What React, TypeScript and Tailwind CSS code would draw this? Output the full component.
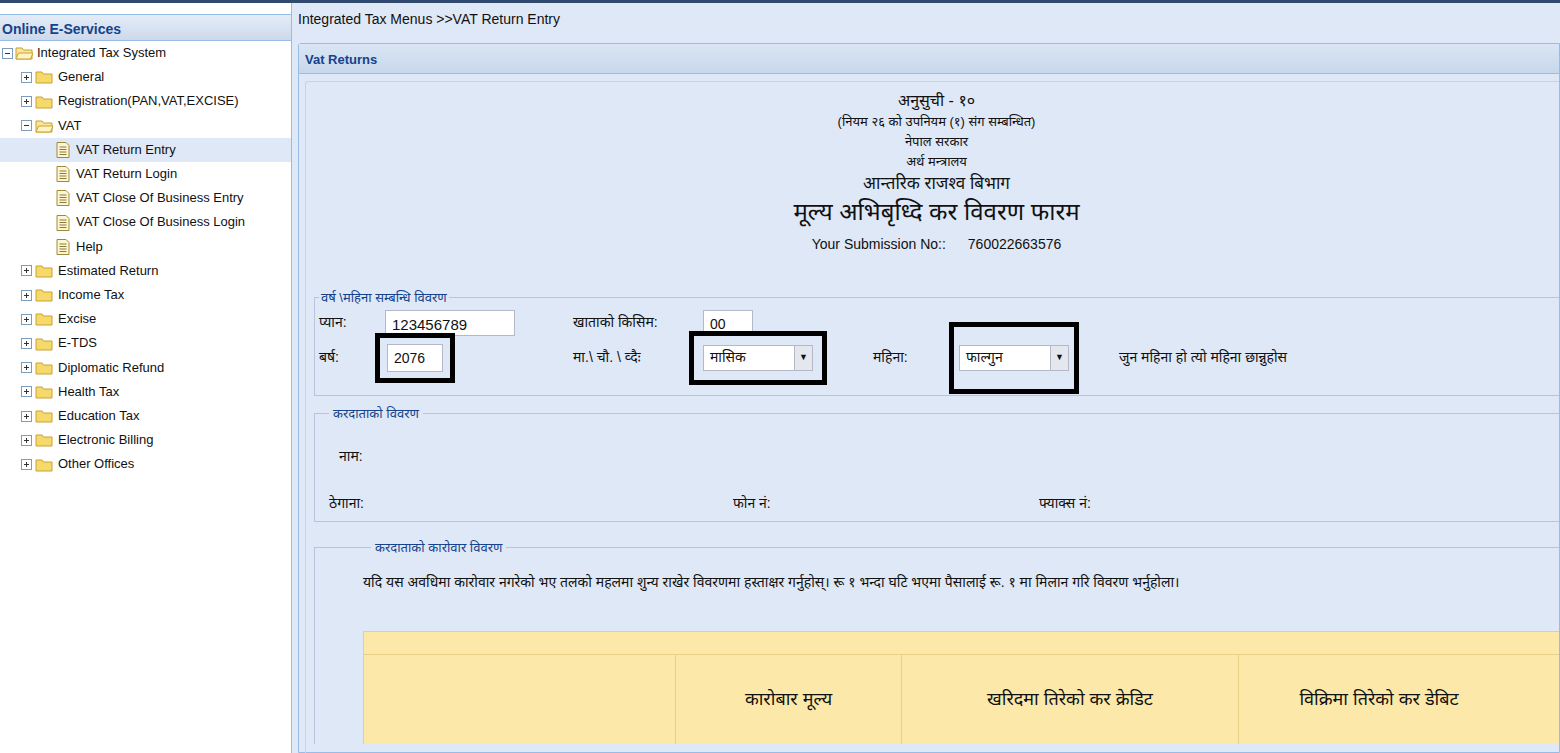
import React from "react";

const F = { fontFamily: '"Liberation Sans","Noto Sans","Noto Sans Devanagari",sans-serif' };

function Folder({ open }: { open?: boolean }) {
  return (
    <svg width="18" height="14" viewBox="0 0 18 14">
      <path d="M1 2h6l1.5 2H17v9H1z" fill={open ? "#fbe59b" : "#f6d96b"} stroke="#c9a22e" />
      {open && <path d="M1 13l2.5-6H18l-2.5 6z" fill="#fff3c4" stroke="#c9a22e" />}
    </svg>
  );
}
function Box({ minus }: { minus?: boolean }) {
  return (
    <svg width="11" height="11" viewBox="0 0 11 11">
      <rect x="0.5" y="0.5" width="10" height="10" fill="#fff" stroke="#7f9db9" />
      <path d="M3 5.5h5" stroke="#333" />
      {!minus && <path d="M5.5 3v5" stroke="#333" />}
    </svg>
  );
}
function Doc() {
  return (
    <svg width="14" height="16" viewBox="0 0 14 16">
      <path d="M1 .5h9l3 3v12H1z" fill="#fdf6d0" stroke="#a08a3a" />
      <path d="M3.5 5h7M3.5 7.5h7M3.5 10h7M3.5 12.5h7" stroke="#8a7a40" />
    </svg>
  );
}

const folders = ["Estimated Return", "Income Tax", "Excise", "E-TDS", "Diplomatic Refund", "Health Tax", "Education Tax", "Electronic Billing", "Other Offices"];
const vatItems = ["VAT Return Entry", "VAT Return Login", "VAT Close Of Business Entry", "VAT Close Of Business Login", "Help"];

function Sel({ v }: { v: string }) {
  return (
    <div className="flex h-[26px] w-[110px] items-center border border-[#b5b8c8] bg-white text-[14px]">
      <span className="flex-1 pl-[6px]">{v}</span>
      <span className="flex h-full w-[18px] items-center justify-center border-l border-[#b5b8c8] bg-[#e4e8ee] text-[9px]">▼</span>
    </div>
  );
}

export default function App() {
  return (
    <div className="flex h-[753px] w-[1560px] overflow-hidden border-t-[3px] border-[#2f4a6e] bg-white text-[#111]" style={F}>
      <aside className="w-[292px] shrink-0 border-r border-[#99bbe8] bg-white pt-[11px]">
        <div className="h-[27px] border-y border-[#99bbe8] bg-gradient-to-b from-[#e4ecf7] to-[#cdd9ea] pl-[2px] pt-[4px] text-[14px] font-bold text-[#15428b]">Online E-Services</div>
        <div className="text-[13px] leading-[24.2px]">
          <div className="flex items-center gap-[2px] pl-[2px]"><Box minus /><Folder open /><span className="ml-[2px]">Integrated Tax System</span></div>
          {["General", "Registration(PAN,VAT,EXCISE)"].map(t => (
            <div key={t} className="flex items-center gap-[3px] pl-[21px]"><Box /><Folder /><span className="ml-[2px]">{t}</span></div>
          ))}
          <div className="flex items-center gap-[3px] pl-[21px]"><Box minus /><Folder open /><span className="ml-[2px]">VAT</span></div>
          {vatItems.map((t, i) => (
            <div key={t} className={`flex items-center gap-[6px] pl-[56px] ${i === 0 ? "bg-[#dfe8f6]" : ""}`}><Doc /><span>{t}</span></div>
          ))}
          {folders.map(t => (
            <div key={t} className="flex items-center gap-[3px] pl-[21px]"><Box /><Folder /><span className="ml-[2px]">{t}</span></div>
          ))}
        </div>
      </aside>
      <main className="flex-1 bg-[#dfe8f6] pl-[6px]">
        <div className="h-[40px] pt-[6px] text-[14px]">Integrated Tax Menus &gt;&gt;VAT Return Entry</div>
        <div className="h-[710px] rounded-tl-[3px] border border-[#99bbe8]">
          <div className="h-[30px] border-b border-[#99bbe8] bg-gradient-to-b from-[#dae6f4] to-[#c7d7ec] pl-[6px] pt-[6px] text-[13px] font-bold text-[#15428b]">Vat Returns</div>
          <div className="ml-[6px] mt-[7px] h-full rounded-tl-[3px] border-l border-t border-[#c5d3e8] pl-[8px]">
            <div className="flex flex-col items-center pt-[8px] text-[13px] leading-[20px]">
              <div className="text-[16px] leading-[22px]">अनुसुची - १०</div>
              <div>(नियम २६ को उपनियम (१) संग सम्बन्धित)</div>
              <div>नेपाल सरकार</div>
              <div>अर्थ मन्त्रालय</div>
              <div className="text-[17px] leading-[24px]">आन्तरिक राजश्व बिभाग</div>
              <div className="text-[24px] leading-[32px]">मूल्य अभिबृध्दि कर विवरण फारम</div>
              <div className="mt-[6px] text-[14px]">Your Submission No::<span className="ml-[22px]">760022663576</span></div>
            </div>
            <fieldset className="mt-[34px] h-[108px] border-t border-l border-b border-[#b5c5dc] pl-[4px]">
              <legend className="px-[2px] text-[13px] text-[#15428b]">वर्ष \महिना सम्बन्धि विवरण</legend>
              <div className="flex h-[30px] items-center text-[14px]">
                <span className="w-[66px]">प्यान:</span>
                <div className="h-[26px] w-[130px] border border-[#b5b8c8] bg-white pl-[6px] pt-[3px] text-[15px]">123456789</div>
                <span className="ml-[58px] w-[130px]">खाताको किसिम:</span>
                <div className="h-[26px] w-[50px] border border-[#b5b8c8] bg-white pl-[6px] pt-[3px]">00</div>
              </div>
              <div className="flex h-[40px] items-center text-[14px]">
                <span className="w-[56px]">बर्ष:</span>
                <div className="flex h-[50px] w-[80px] items-center justify-center border-[5px] border-black">
                  <div className="h-[28px] w-[56px] border border-[#b5b8c8] bg-white pl-[6px] pt-[3px]">2076</div>
                </div>
                <span className="ml-[118px] w-[116px]">मा.\ चौ. \ व्दैः</span>
                <div className="flex h-[54px] w-[138px] items-center justify-center border-[5px] border-black"><Sel v="मासिक" /></div>
                <span className="ml-[46px] w-[76px]">महिना:</span>
                <div className="flex h-[72px] w-[130px] items-center justify-center border-[5px] border-black"><Sel v="फाल्गुन" /></div>
                <span className="ml-[40px]">जुन महिना हो त्यो महिना छान्नुहोस</span>
              </div>
            </fieldset>
            <fieldset className="mt-[8px] h-[118px] border-t border-l border-b border-[#b5c5dc] pl-[14px]">
              <legend className="px-[4px] text-[13px] text-[#15428b]">करदाताको विवरण</legend>
              <div className="mt-[22px] pl-[10px] text-[14px]">नाम:</div>
              <div className="mt-[26px] flex text-[14px]">
                <span className="w-[404px]">ठेगाना:</span>
                <span className="w-[306px]">फोन नं:</span>
                <span>फ्याक्स नं:</span>
              </div>
            </fieldset>
            <fieldset className="mt-[16px] border-t border-l border-[#b5c5dc] pl-[48px]">
              <legend className="ml-[8px] px-[4px] text-[13px] text-[#15428b]">करदाताको कारोवार विवरण</legend>
              <div className="mt-[14px] text-[14px]">यदि यस अवधिमा कारोवार नगरेको भए तलको महलमा शुन्य राखेर विवरणमा हस्ताक्षर गर्नुहोस्। रू १ भन्दा घटि भएमा पैसालाई रू. १ मा मिलान गरि विवरण भर्नुहोला।</div>
              <div className="mt-[38px] border-l border-t border-[#e8cf8a] bg-[#fce9a9]">
                <div className="h-[22px]" />
                <div className="grid h-[90px] grid-cols-[312px_226px_337px_1fr] border-t border-[#e8cf8a] text-[18px]">
                  <div className="border-r border-[#e8cf8a]" />
                  <div className="flex items-center justify-center border-r border-[#e8cf8a]">कारोबार मूल्य</div>
                  <div className="flex items-center justify-center border-r border-[#e8cf8a]">खरिदमा तिरेको कर क्रेडिट</div>
                  <div className="flex items-center justify-center pr-[40px]">विक्रिमा तिरेको कर डेबिट</div>
                </div>
              </div>
            </fieldset>
          </div>
        </div>
      </main>
    </div>
  );
}
